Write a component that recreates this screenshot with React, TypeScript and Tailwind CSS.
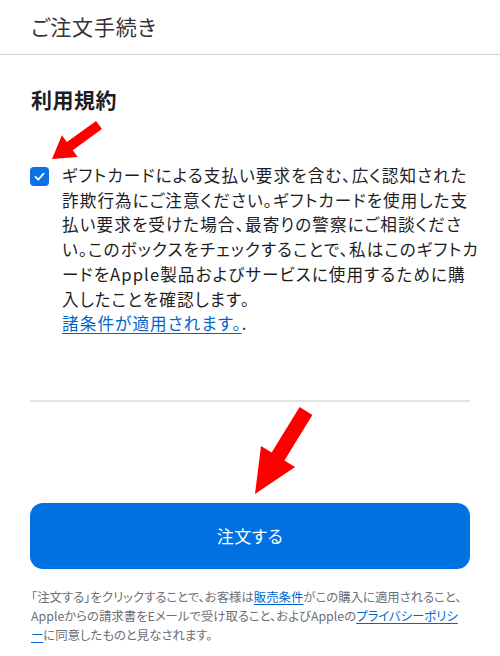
import React from "react"

type Pt = [number, number]

// red callout arrow as a single polygon, tail -> tip
function arrowPoints(tail: Pt, tip: Pt, shaft: number, headW: number, headL: number) {
  const dx = tip[0] - tail[0]
  const dy = tip[1] - tail[1]
  const len = Math.hypot(dx, dy)
  const ux = dx / len
  const uy = dy / len
  const px = -uy
  const py = ux
  const bx = tip[0] - ux * headL
  const by = tip[1] - uy * headL
  const pts: Pt[] = [
    [tail[0] + (px * shaft) / 2, tail[1] + (py * shaft) / 2],
    [bx + (px * shaft) / 2, by + (py * shaft) / 2],
    [bx + (px * headW) / 2, by + (py * headW) / 2],
    tip,
    [bx - (px * headW) / 2, by - (py * headW) / 2],
    [bx - (px * shaft) / 2, by - (py * shaft) / 2],
    [tail[0] - (px * shaft) / 2, tail[1] - (py * shaft) / 2],
  ]
  return pts.map((p) => p.join(",")).join(" ")
}

const termsLines = [
  "ギフトカードによる支払い要求を含む、広く認知された",
  "詐欺行為にご注意ください。ギフトカードを使用した支",
  "払い要求を受けた場合、最寄りの警察にご相談くださ",
  "い。このボックスをチェックすることで、私はこのギフトカ",
  "ードをApple製品およびサービスに使用するために購",
  "入したことを確認します。",
]

export default function App() {
  return (
    <div
      className="relative w-[500px] h-[656px] overflow-hidden bg-white text-[#1d1d1f]"
      style={{ fontFamily: '"Noto Sans CJK JP", "Noto Sans", sans-serif', fontFeatureSettings: '"palt"' }}
    >
      <header className="h-[55px] px-[31px] flex items-center border-b border-[#d4d4d4]">
        <h1 className="text-[21px] leading-none tracking-[0.8px] text-[#333] pb-[2px]">ご注文手続き</h1>
      </header>

      <main className="px-[30px]">
        <h2 className="mt-[29px] text-[21px] leading-[30px] font-bold tracking-[0.5px] pl-[1px]">利用規約</h2>

        <div className="mt-[49px] flex items-start">
          <div className="mt-[4px] w-[19px] h-[19px] shrink-0 rounded-[4px] bg-[#0a72e6] flex items-center justify-center">
            <svg width="13" height="13" viewBox="0 0 13 13" fill="none">
              <path d="M2.5 6.8l2.8 2.8L10.6 3.6" stroke="white" strokeWidth="1.8" strokeLinecap="round" strokeLinejoin="round" />
            </svg>
          </div>
          <div className="ml-[13px] text-[16.6px] leading-[24.7px] tracking-[1.1px]">
            {termsLines.map((line) => (
              <span key={line} className="block whitespace-nowrap">
                {line}
              </span>
            ))}
            <span className="block whitespace-nowrap">
              <a href="#" className="text-[#0066cc] underline underline-offset-[3px]">
                諸条件が適用されます。
              </a>
              .
            </span>
          </div>
        </div>

        <div className="mt-[64px] h-[2px] bg-[#e3e3e3]" />

        <button className="mt-[101px] w-full h-[66px] rounded-[13px] bg-[#0071e3] text-white text-[17px] tracking-[0.5px]">
          注文する
        </button>

        <p className="mt-[19px] text-[12.4px] leading-[19px] text-[#6e6e73] pl-[1px]">
          <span className="block whitespace-nowrap">
            「注文する」をクリックすることで、お客様は
            <a href="#" className="text-[#0066cc] underline underline-offset-2">販売条件</a>
            がこの購入に適用されること、
          </span>
          <span className="block whitespace-nowrap">
            Appleからの請求書をEメールで受け取ること、およびAppleの
            <a href="#" className="text-[#0066cc] underline underline-offset-2">プライバシーポリシ</a>
          </span>
          <span className="block whitespace-nowrap">
            <a href="#" className="text-[#0066cc] underline underline-offset-2">ー</a>
            に同意したものと見なされます。
          </span>
        </p>
      </main>

      <svg className="absolute inset-0 pointer-events-none" width="500" height="656">
        <polygon points={arrowPoints([99, 125], [52, 159], 10, 27, 22)} fill="#ff0000" />
        <polygon points={arrowPoints([306, 411], [255, 494], 15, 40, 44)} fill="#ff0000" />
      </svg>
    </div>
  )
}
